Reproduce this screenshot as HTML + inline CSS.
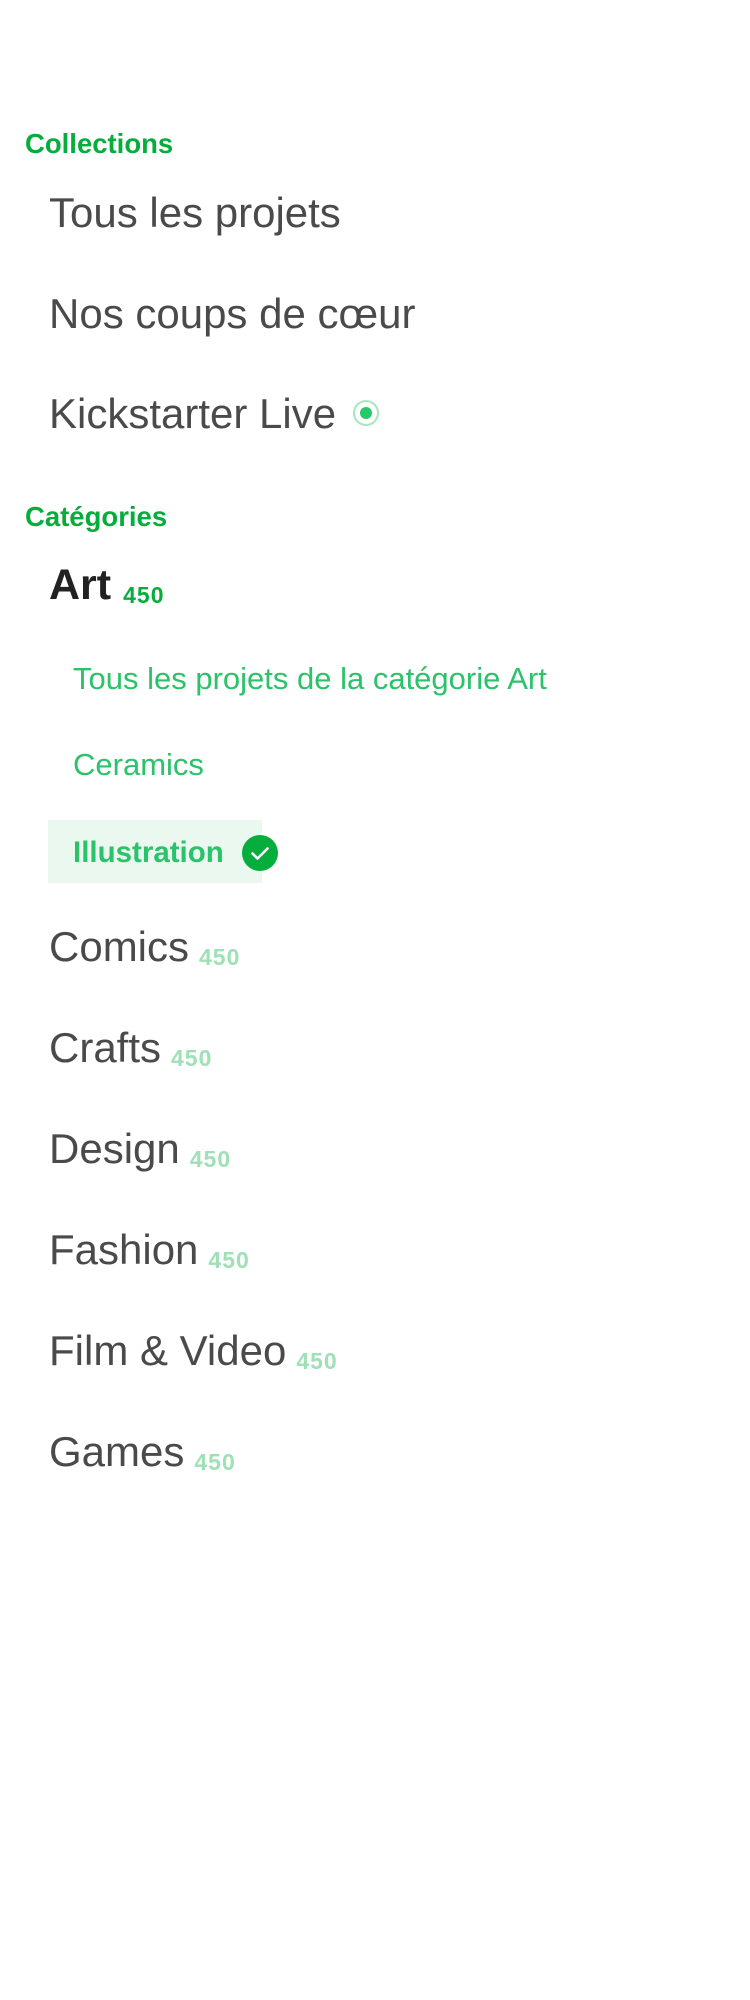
<!DOCTYPE html>
<html><head><meta charset="utf-8"><style>
body{margin:0;width:750px;height:2000px;background:#fff;position:relative;font-family:"Liberation Sans",sans-serif;overflow:hidden}
.a{position:absolute;white-space:nowrap;line-height:normal}
.h{font-weight:bold;color:#05ae3c;font-size:27.5px}
.c{color:#4a4a4a;font-size:42px;left:49px}
.n{font-size:23px;color:#9fe0b6;font-weight:bold;margin-left:10px;position:relative;top:4px;letter-spacing:1px}
.s{color:#2bc26a;font-size:31px;left:73px}
</style></head><body>
<div class="a h" style="left:25px;top:128px">Collections</div>
<div class="a c" style="top:189px">Tous les projets</div>
<div class="a c" style="top:290px">Nos coups de cœur</div>
<div class="a c" style="top:390px">Kickstarter Live</div>
<svg class="a" style="left:352px;top:399px" width="28" height="28"><circle cx="14" cy="14" r="12" fill="none" stroke="#a8e6c0" stroke-width="2"/><circle cx="14" cy="14" r="6" fill="#25c967"/></svg>
<div class="a h" style="left:25px;top:501px">Catégories</div>
<div class="a" style="left:49px;top:561px;font-size:43px;font-weight:bold;color:#222">Art<span class="n" style="color:#05ae3c;margin-left:12px">450</span></div>
<div class="a s" style="top:661px">Tous les projets de la catégorie Art</div>
<div class="a s" style="top:747px">Ceramics</div>
<div style="position:absolute;left:48px;top:820px;width:214px;height:63px;background:#eaf8ef"></div>
<div class="a s" style="top:836px;font-weight:bold;font-size:29.5px">Illustration</div>
<svg class="a" style="left:242px;top:835px" width="36" height="36"><circle cx="18" cy="18" r="18" fill="#05ae3c"/><path d="M10.5 18.5l5 5 10-10" fill="none" stroke="#fff" stroke-width="2.6" stroke-linecap="round" stroke-linejoin="round"/></svg>
<div class="a c" style="top:923px">Comics<span class="n">450</span></div>
<div class="a c" style="top:1024px">Crafts<span class="n">450</span></div>
<div class="a c" style="top:1125px">Design<span class="n">450</span></div>
<div class="a c" style="top:1226px">Fashion<span class="n">450</span></div>
<div class="a c" style="top:1327px">Film &amp; Video<span class="n">450</span></div>
<div class="a c" style="top:1428px">Games<span class="n">450</span></div>
</body></html>
